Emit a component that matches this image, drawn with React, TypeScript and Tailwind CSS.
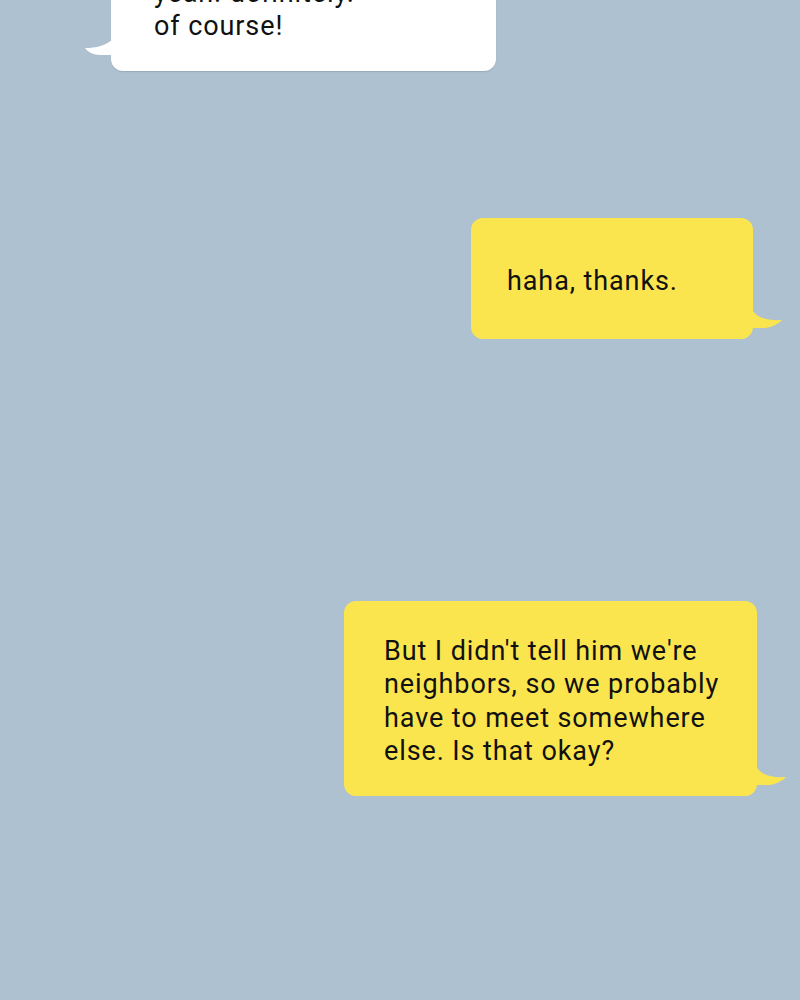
import React from 'react'

const font = { fontFamily: 'Roboto, "Liberation Sans", sans-serif' }

function TailLeft() {
  return (
    <svg
      className="absolute -left-[27px] bottom-[13px]"
      width="30"
      height="20"
      viewBox="0 0 30 20"
    >
      <path d="M30 0 C22 8 12 10 1 10 C4 14 9 17 16 17 L30 17 Z" fill="#ffffff" />
    </svg>
  )
}

function TailRight({ color }: { color: string }) {
  return (
    <svg
      className="absolute -right-[30px] bottom-[8px]"
      width="32"
      height="24"
      viewBox="0 0 32 24"
    >
      <path d="M0 0 C4 10 14 14 31 13 C26 18 18 22 8 21 L0 21 Z" fill={color} />
    </svg>
  )
}

export default function App() {
  return (
    <div className="w-[800px] h-[1000px] overflow-hidden bg-[#aec1d0]" style={font}>
      <div className="flex flex-col">
        {/* incoming */}
        <div className="pl-[111px] -mt-[55px]">
          <div className="relative w-[385px] bg-white rounded-[12px] pl-[43px] pt-[32px] pb-[28px] text-[27px] leading-[33px] tracking-[0.9px] text-[#111] shadow-[0_1px_1px_rgba(0,0,0,0.12)]">
            <p>yeah. definitely.</p>
            <p>of course!</p>
            <TailLeft />
          </div>
        </div>

        {/* outgoing */}
        <div className="flex justify-end pr-[47px] mt-[147px]">
          <div className="relative w-[282px] h-[121px] bg-[#fae54f] rounded-[12px] pl-[36px] pt-[47px] text-[27px] leading-[33px] tracking-[0.9px] text-[#111]">
            <p>haha, thanks.</p>
            <TailRight color="#fae54f" />
          </div>
        </div>

        <div className="flex justify-end pr-[43px] mt-[262px]">
          <div className="relative w-[413px] h-[195px] bg-[#fae54f] rounded-[12px] pl-[40px] pt-[34px] text-[27px] leading-[33.3px] tracking-[0.9px] text-[#111]">
            <p>But I didn't tell him we're</p>
            <p>neighbors, so we probably</p>
            <p>have to meet somewhere</p>
            <p>else. Is that okay?</p>
            <TailRight color="#fae54f" />
          </div>
        </div>
      </div>
    </div>
  )
}
